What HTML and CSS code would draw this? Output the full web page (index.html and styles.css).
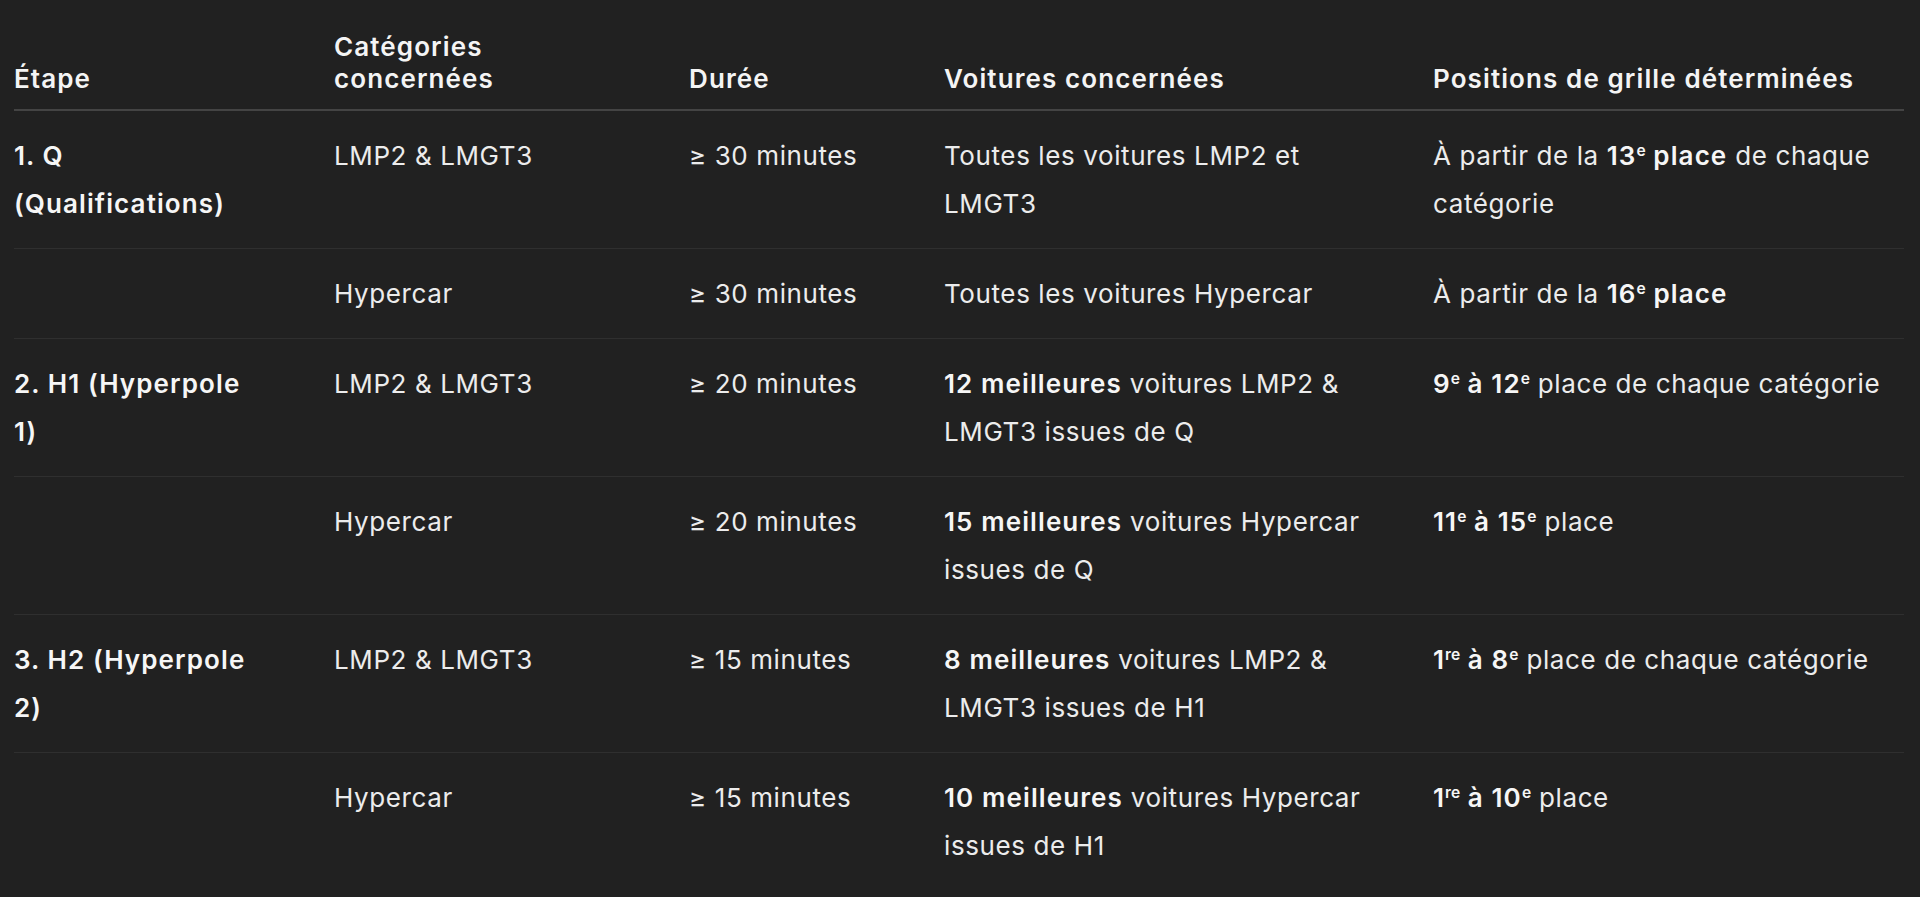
FILE: index.html
```html
<!DOCTYPE html>
<html lang="fr">
<head>
    <meta charset="utf-8">
    <title>Qualifications – Hyperpole</title>
    <link rel="stylesheet" href="styles.css">
</head>
<body>

    <div class="table-wrap">
        <table class="grid-table">
            <colgroup>
                <col class="col-step">
                <col class="col-cat">
                <col class="col-time">
                <col class="col-cars">
                <col class="col-pos">
            </colgroup>
            <thead>
                <tr>
                    <th>Étape</th>
                    <th>Catégories concernées</th>
                    <th>Durée</th>
                    <th>Voitures concernées</th>
                    <th>Positions de grille déterminées</th>
                </tr>
            </thead>
            <tbody>
                <tr>
                    <td><strong>1. Q (Qualifications)</strong></td>
                    <td>LMP2 &amp; LMGT3</td>
                    <td>≥ 30 minutes</td>
                    <td>Toutes les voitures LMP2 et LMGT3</td>
                    <td>À partir de la <strong>13<sup>e</sup> place</strong> de chaque catégorie</td>
                </tr>
                <tr>
                    <td></td>
                    <td>Hypercar</td>
                    <td>≥ 30 minutes</td>
                    <td>Toutes les voitures Hypercar</td>
                    <td>À partir de la <strong>16<sup>e</sup> place</strong></td>
                </tr>
                <tr>
                    <td><strong>2. H1 (Hyperpole 1)</strong></td>
                    <td>LMP2 &amp; LMGT3</td>
                    <td>≥ 20 minutes</td>
                    <td><strong>12 meilleures</strong> voitures LMP2 &amp; LMGT3 issues de Q</td>
                    <td><strong>9<sup>e</sup> à 12<sup>e</sup></strong> place de chaque catégorie</td>
                </tr>
                <tr>
                    <td></td>
                    <td>Hypercar</td>
                    <td>≥ 20 minutes</td>
                    <td><strong>15 meilleures</strong> voitures Hypercar issues de Q</td>
                    <td><strong>11<sup>e</sup> à 15<sup>e</sup></strong> place</td>
                </tr>
                <tr>
                    <td><strong>3. H2 (Hyperpole 2)</strong></td>
                    <td>LMP2 &amp; LMGT3</td>
                    <td>≥ 15 minutes</td>
                    <td><strong>8 meilleures</strong> voitures LMP2 &amp; LMGT3 issues de H1</td>
                    <td><strong>1<sup>re</sup> à 8<sup>e</sup></strong> place de chaque catégorie</td>
                </tr>
                <tr>
                    <td></td>
                    <td>Hypercar</td>
                    <td>≥ 15 minutes</td>
                    <td><strong>10 meilleures</strong> voitures Hypercar issues de H1</td>
                    <td><strong>1<sup>re</sup> à 10<sup>e</sup></strong> place</td>
                </tr>
            </tbody>
        </table>
    </div>

</body>
</html>
```

FILE: styles.css
```css
body {
    background-color: #212121;
    color: #ececec;
    font-family: Inter, "Noto Sans", "Liberation Sans", sans-serif;
    font-size: 26px;
    letter-spacing: 0.6px;
    margin: 0;
}
.table-wrap {
    padding: 22px 16px 0 14px;
}
.grid-table {
    width: 100%;
    border-collapse: collapse;
    table-layout: fixed;
}
.col-step { width: 320px; }
.col-cat { width: 355px; }
.col-time { width: 255px; }
.col-cars { width: 489px; }

th, td {
    text-align: left;
    padding-left: 0;
    padding-right: 64px;
}
th:first-child, td:first-child {
    padding-right: 72px;
}
th:last-child, td:last-child {
    padding-right: 0;
}
th {
    color: #f4f4f4;
    font-weight: 600;
    letter-spacing: 1.1px;
    line-height: 32px;
    vertical-align: bottom;
    padding-top: 9px;
    padding-bottom: 14px;
    border-bottom: 2px solid #444;
}
td {
    line-height: 48px;
    vertical-align: top;
    padding-top: 21px;
    padding-bottom: 20px;
    border-bottom: 1px solid #2f2f2f;
}
tbody tr:last-child td {
    border-bottom: none;
}
strong {
    color: #f6f6f6;
    font-weight: 600;
    letter-spacing: 1.1px;
}
sup {
    font-size: 0.6em;
    line-height: 0;
    letter-spacing: 0;
    vertical-align: 0.55em;
}
```
